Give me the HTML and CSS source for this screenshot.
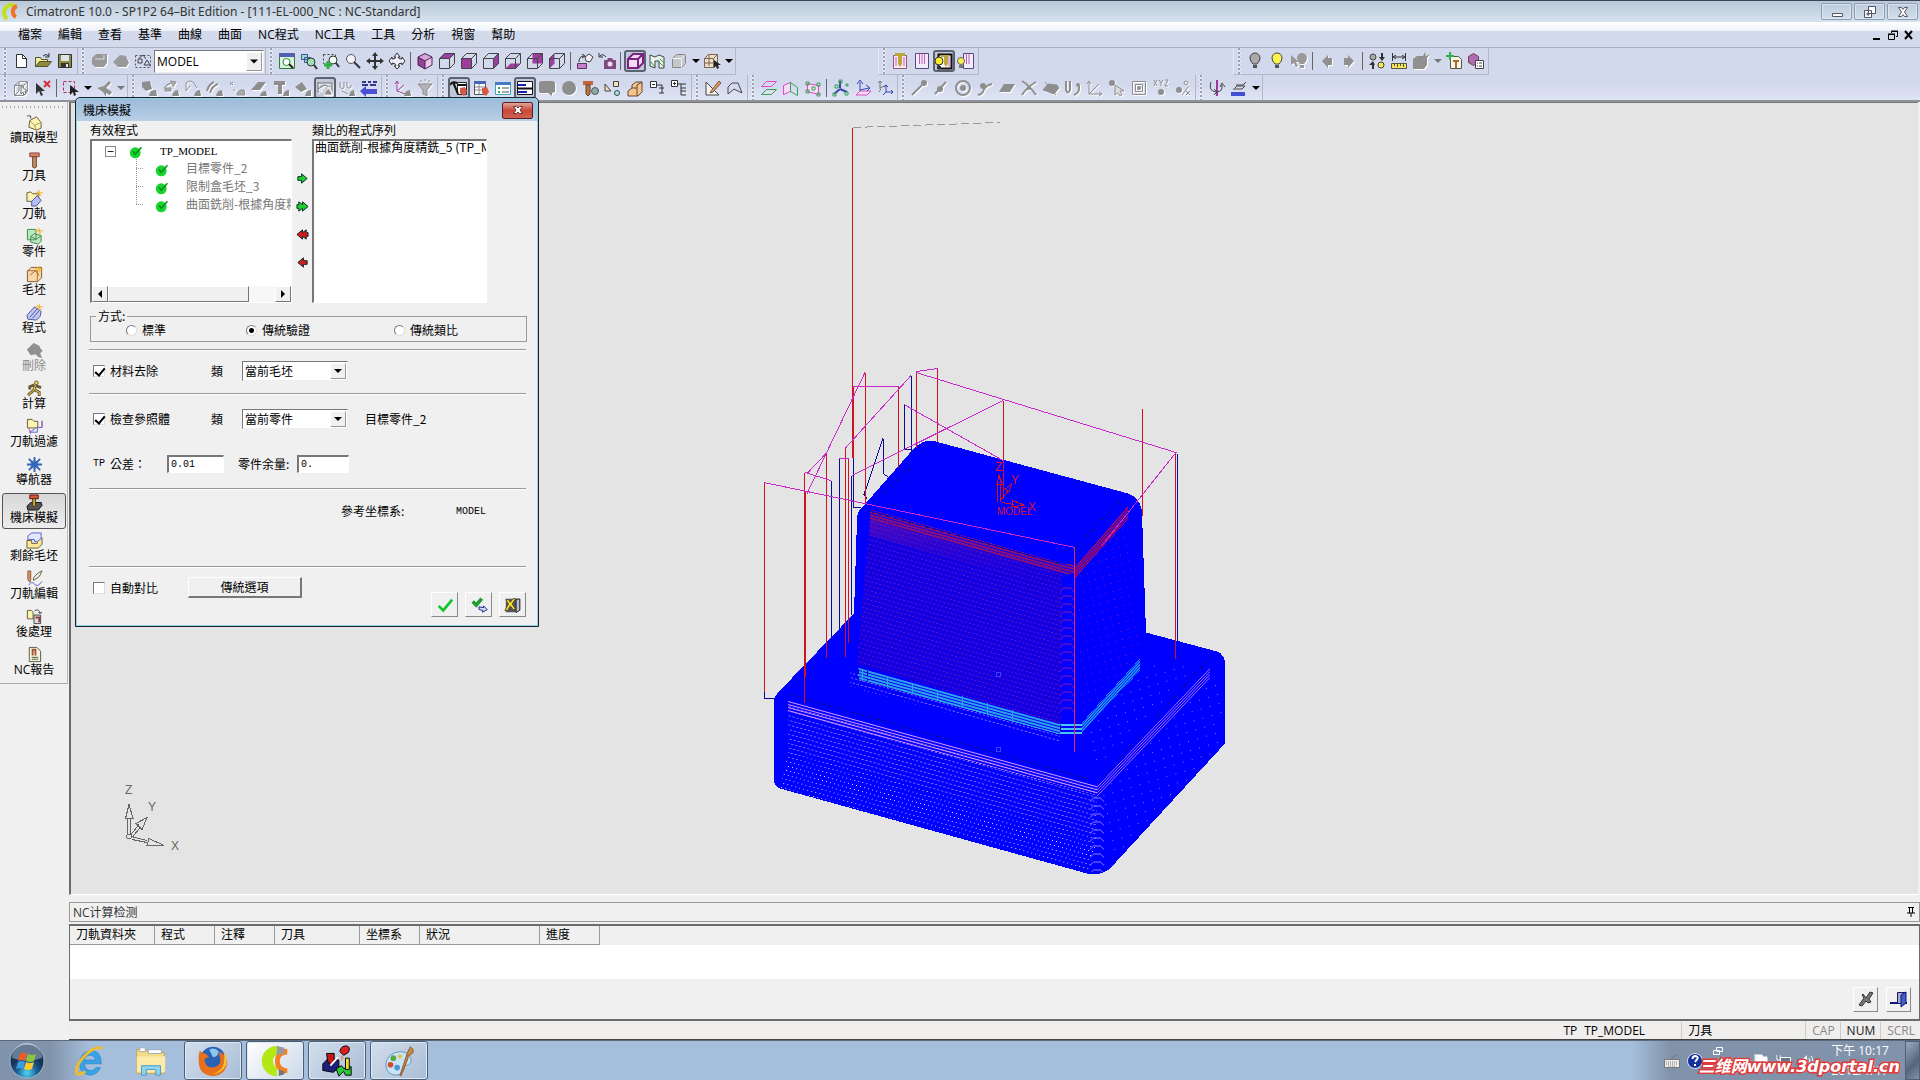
FILE: index.html
```
<!DOCTYPE html>
<html lang="zh-Hant">
<head>
    <meta charset="UTF-8">
    <title>CimatronE 10.0</title>
    <link rel="stylesheet" href="styles.css">
</head>
<body>
<!-- 圖示 -->
<svg class="defs">
    <symbol id="logo" viewBox="0 0 18 18"><path d="M13 2A8 8 0 0 0 6 16" fill="none" stroke="#c3e01c" stroke-width="4"/><path d="M16 3A6 6 0 0 0 15 14" fill="none" stroke="#f0742a" stroke-width="4"/></symbol>
    <symbol id="new" viewBox="0 0 18 18"><path d="M4.500 2.500h6l4 4v9h-10z" fill="#fff" stroke="#333"/><path d="M10.500 2.500v4h4" fill="none" stroke="#333"/></symbol>
    <symbol id="open" viewBox="0 0 18 18"><path d="M1.500 14.500v-9h5l1 2h6v2" fill="#f5ee9a" stroke="#55552a"/><path d="M1.500 14.500l4-5h12l-4 5z" fill="#8c8c3c" stroke="#55552a"/><path d="M9 4q3-3 6 0M15 1v4h-4" fill="none" stroke="#333"/></symbol>
    <symbol id="save" viewBox="0 0 18 18"><path d="M2.500 2.500h13v13h-13z" fill="#8c8c3c" stroke="#333"/><path d="M5 3h8v6H5z" fill="#dfe3ee"/><path d="M5 11h8v4H5z" fill="#333"/><path d="M10 12h2v3h-2z" fill="#eee"/></symbol>
    <symbol id="gstack" viewBox="0 0 18 18"><path d="M2 6l4-4h11v9l-3 4H5l-3-3z" fill="#999"/><path d="M5 7h9V3" fill="none" stroke="#ddd"/></symbol>
    <symbol id="gblob" viewBox="0 0 18 18"><path d="M1 10l7-7 6 1 3 7-3 4H6z" fill="#999"/></symbol>
    <symbol id="ucs" viewBox="0 0 18 18"><path d="M1.500 3.500h15v12h-15z" fill="none" stroke="#556" stroke-dasharray="2 2"/><path d="M4 7h4v4H4zM5 6l4-3 3 4M10 13l3-5 3 5z" fill="none" stroke="#444"/></symbol>
    <symbol id="zoomall" viewBox="0 0 18 18"><path d="M1.500 1.500h15v15h-15z" fill="#d8f4d8" stroke="#357a45"/><path d="M1 1h16v4H1z" fill="#5560b0"/><circle cx="8.500" cy="10" r="3.500" fill="#fff" stroke="#284"/><path d="M11 12l4 4" stroke="#222" stroke-width="2"/></symbol>
    <symbol id="zoomprev" viewBox="0 0 18 18"><path d="M1.500 2.500h6v5h-6zM4.500 5.500h6v5h-6z" fill="#9fe0c0" stroke="#3b52a0"/><circle cx="11" cy="10" r="4" fill="#9fe0b0" stroke="#333"/><path d="M14 13l3 4" stroke="#333" stroke-width="2"/></symbol>
    <symbol id="zoomwin" viewBox="0 0 18 18"><path d="M1.500 2.500h12v9h-12z" fill="none" stroke="#444" stroke-dasharray="2 2"/><circle cx="11" cy="8" r="4" fill="#f4fff4" stroke="#333"/><path d="M14 11l3 4" stroke="#333" stroke-width="2"/><path d="M2 13h8M6 9v8" stroke="#2fae4a" stroke-width="3"/></symbol>
    <symbol id="zoom" viewBox="0 0 18 18"><circle cx="7" cy="7" r="4.500" fill="#f2f2f6" stroke="#555"/><path d="M10 10l6 6" stroke="#333" stroke-width="2"/></symbol>
    <symbol id="pan" viewBox="0 0 18 18"><path d="M9 3v12M3 9h12" stroke="#333" stroke-width="2"/><path d="M9 0l3 4H6zM9 18l3-4H6zM0 9l4-3v6zM18 9l-4-3v6z" fill="#333"/></symbol>
    <symbol id="rotate" viewBox="0 0 18 18"><path d="M9 1l3 4h-2q0 2 4 2V5l3 4-3 4v-2q-4 0-4 3h2l-3 3-3-3h2q0-3-4-3v2L1 9l3-4v2q4 0 4-2H6z" fill="#eef" stroke="#333"/></symbol>
    <symbol id="cubeiso" viewBox="0 0 18 18"><path d="M2 5l7-3.500 7 3.500-7 4z" fill="#d9a3dc"/><path d="M2 5l7 4v8l-7-4z" fill="#98419b"/><path d="M9 9l7-4v8l-7 4z" fill="#e7c7ea"/><path d="M2 5l7-3.500 7 3.500v8l-7 4-7-4zM2 5l7 4 7-4M9 9v8" fill="none" stroke="#4a2450"/></symbol>
    <symbol id="cubewire" viewBox="0 0 18 18"><path d="M1.500 6.500h10v10h-10zM1.500 6.500l5-5h10v10l-5 5M11.500 6.500l5-5" fill="none" stroke="#444"/></symbol>
    <symbol id="cubetop" viewBox="0 0 18 18"><path d="M1.500 6.500l5-5h10l-5 5z" fill="#9c3d9f"/><use href="#cubewire"/></symbol>
    <symbol id="cubefront" viewBox="0 0 18 18"><path d="M1.500 6.500h10v10h-10z" fill="#9c3d9f"/><use href="#cubewire"/></symbol>
    <symbol id="cuberight" viewBox="0 0 18 18"><path d="M11.500 6.500l5-5v10l-5 5z" fill="#9c3d9f"/><use href="#cubewire"/></symbol>
    <symbol id="cubebottom" viewBox="0 0 18 18"><path d="M1.500 16.500l5-5h10l-5 5z" fill="#9c3d9f"/><use href="#cubewire"/></symbol>
    <symbol id="cubeback" viewBox="0 0 18 18"><path d="M6.500 1.500h10v10h-10z" fill="#9c3d9f"/><use href="#cubewire"/></symbol>
    <symbol id="cubeleft" viewBox="0 0 18 18"><path d="M1.500 6.500l5-5v10l-5 5z" fill="#9c3d9f"/><use href="#cubewire"/></symbol>
    <symbol id="setview" viewBox="0 0 18 18"><path d="M1.500 11.500h9v5h-9z" fill="#c77fc9" stroke="#5a3560"/><path d="M9 5l4-3 4 3-3 5-4-1z" fill="#f4eef4" stroke="#444"/><path d="M3 10q0-6 5-6M6 2l3 2-3 2" fill="none" stroke="#333"/></symbol>
    <symbol id="camera" viewBox="0 0 18 18"><path d="M6 8h3l1-2h4l1 2h3v9H6z" fill="#7d4a82"/><circle cx="12" cy="12" r="2.500" fill="#f3d7f4"/><path d="M8 5Q5 1 2 4M1 1v4h4" fill="none" stroke="#333"/></symbol>
    <symbol id="shade" viewBox="0 0 18 18"><path d="M2 7l5-5h10v9l-5 5H2z" fill="#f4d8f4"/><path d="M2 7l5-5h10v9l-5 5H2zM2 7h10v9M12 7l5-5" fill="none" stroke="#7a2382" stroke-width="2"/></symbol>
    <symbol id="section" viewBox="0 0 18 18"><path d="M2 3l5 2 4-2 5 2v11h-5v-7H7v7l-5-2z" fill="#e6f3e8" stroke="#444"/><path d="M3 10l4 5M11 10l5 5M12 7l4 4" stroke="#3a9a4a"/></symbol>
    <symbol id="cubegray" viewBox="0 0 18 18"><path d="M2.500 6.500l4-4h9v9l-4 4h-9z" fill="#c6c7cd" stroke="#888"/><path d="M2.500 6.500h9v9M11.500 6.500l4-4" fill="none" stroke="#f4f4f4"/></symbol>
    <symbol id="cubepick" viewBox="0 0 18 18"><path d="M1.500 6.500l4-4h9v9l-4 4h-9z" fill="#f1dcc6" stroke="#765"/><path d="M1.500 6.500h9v9M10.500 6.500l4-4M6 3v11M2 11h9" fill="none" stroke="#765"/><path d="M11 8v8l2-2 1 3 2-1-1-3h3z" fill="#222"/></symbol>
    <symbol id="tool1" viewBox="0 0 18 18"><path d="M2.500 3.500h13v13h-13z" fill="#fbe9f4" stroke="#8a5a78"/><path d="M4 1h10v3H4zM7 4h4v8l-2 3-2-3z" fill="#b9a83c"/><path d="M5 5v9M13 5v9" stroke="#e04cc0"/></symbol>
    <symbol id="tool2" viewBox="0 0 18 18"><path d="M2.500 1.500h13v15h-13z" fill="#f2ecfa" stroke="#5b4a80"/><path d="M6.500 2v10M9 2v10M11.500 2v10" stroke="#c65ac0"/></symbol>
    <symbol id="tool3" viewBox="0 0 18 18"><path d="M3.500 2.500h13v14h-13z" fill="#fff" stroke="#111" stroke-width="2"/><path d="M6 3h8v2H6zM9 5h4v7l-2 3-2-3z" fill="#b9a83c"/><path d="M14 5v10" stroke="#e04cc0"/><circle cx="4" cy="9" r="4" fill="#ffee2a" stroke="#333"/><path d="M2 14h4v3H2z" fill="#333"/></symbol>
    <symbol id="tool4" viewBox="0 0 18 18"><path d="M6.500 1.500h10v15h-10z" fill="#f2ecfa" stroke="#5b4a80"/><path d="M9.500 2v10M12 2v10" stroke="#c65ac0"/><circle cx="4" cy="9" r="3.500" fill="#f6ee50" stroke="#666"/><path d="M2 13h4v3H2z" fill="#777"/></symbol>
    <symbol id="bulb" viewBox="0 0 18 18"><path d="M9 1a5 5 0 0 0-5 5q0 3 3 6h4q3-3 3-6a5 5 0 0 0-5-5z" fill="currentColor" stroke="#444"/><path d="M7 13h4v3H7z" fill="#555"/></symbol>
    <symbol id="bulbpick" viewBox="0 0 18 18"><path d="M12 1a5 5 0 0 0-5 5q0 3 3 6h4q3-3 3-6a5 5 0 0 0-5-5zM10 13h4v3h-4zM1 3v10l3-2 2 4 2-1-2-4h3z" fill="#999"/></symbol>
    <symbol id="gleft" viewBox="0 0 18 18"><path d="M4 9l6-6v3h4v7h-4v3z" fill="#909090"/></symbol>
    <symbol id="gright" viewBox="0 0 18 18"><path d="M14 9L8 3v3H4v7h4v3z" fill="#909090"/></symbol>
    <symbol id="swap" viewBox="0 0 18 18"><circle cx="5" cy="5" r="3" fill="#aaa" stroke="#444"/><circle cx="13" cy="13" r="3" fill="#f6ee50" stroke="#444"/><path d="M11 5h2V1h2v4h2l-3 4zM7 13H6v4H4v-4H1l4-4z" fill="#333"/></symbol>
    <symbol id="measure" viewBox="0 0 18 18"><path d="M2.500 1v8M15.500 1v8M4 5h10M6 3L3 5l3 2M12 3l3 2-3 2" fill="none" stroke="#333"/><path d="M1.500 11.500h15v5h-15z" fill="#f4e65c" stroke="#554"/><path d="M4.500 12v2M7.500 12v3M10.500 12v2M13.500 12v3" stroke="#554"/></symbol>
    <symbol id="gbox" viewBox="0 0 18 18"><path d="M1 7l4-3h6l2-4 1 4 4-2-3 4v7l-3 4H1z" fill="#909090"/></symbol>
    <symbol id="addtool" viewBox="0 0 18 18"><path d="M5.500 4.500h8l3 3v9h-11z" fill="#f4f6ea" stroke="#554"/><path d="M8 8h6v2H8zM10 10h2v6h-2z" fill="#b06a30"/><path d="M1 4h8M5 0v8" stroke="#2fae4a" stroke-width="2"/></symbol>
    <symbol id="cubeprop" viewBox="0 0 18 18"><path d="M1.500 4.500l5-3 5 3v6l-5 3-5-3z" fill="#b06ab4" stroke="#644"/><path d="M8.500 8.500h8v8h-8z" fill="#fff" stroke="#444"/><path d="M10 11h1M12 11h3M10 14h1M12 14h3" stroke="#444"/></symbol>
    <symbol id="wirepick" viewBox="0 0 18 18"><path d="M2.500 6.500l5-4h8v10l-4 4h-9zM2.500 6.500h9v10M11.500 6.500l4-4M7 3v9l-4 4" fill="none" stroke="#8a8a8a"/><path d="M9 7v8l2-2 1 3 2-1-1-3h2z" fill="#eee" stroke="#777"/></symbol>
    <symbol id="unpick" viewBox="0 0 18 18"><path d="M2 4v11l3-3 2 5 2-1-2-4h4z" fill="#333"/><path d="M10 2l6 6M16 2l-6 6" stroke="#d3303c" stroke-width="2"/></symbol>
    <symbol id="boxpick" viewBox="0 0 18 18"><path d="M1.500 2.500h11v11h-11z" fill="none" stroke="#b03048" stroke-width="1" stroke-dasharray="3 2"/><path d="M8 6v10l3-3 1 4 2-1-1-3h4z" fill="#222"/></symbol>
    <symbol id="gwand" viewBox="0 0 18 18"><path d="M2 9l7-2 5-5 2 2-5 5 6 4-2 3-4-2v4l-3-5z" fill="#909090"/></symbol>
    <symbol id="g1" viewBox="0 0 18 18"><path d="M2 3l8-1 2 8-6 2-4-4zM9 17q1-7 7-6l1 6z" fill="#8e8e8e"/></symbol>
    <symbol id="g2" viewBox="0 0 18 18"><path d="M2 9q3-5 8-5M8 2l6 1-3 5M3 9h6v3H3z" fill="#aaa" stroke="#8e8e8e"/><path d="M10 17q1-6 6-6l1 6z" fill="#8e8e8e"/></symbol>
    <symbol id="g3" viewBox="0 0 18 18"><path d="M2 12V4q4-4 8 0l3 5M2 12l4-5" fill="none" stroke="#8e8e8e"/><path d="M10 17q1-6 6-6l1 6z" fill="#8e8e8e"/></symbol>
    <symbol id="g4" viewBox="0 0 18 18"><path d="M1 12q2-7 7-9M4 14q2-7 8-9" fill="none" stroke="#8e8e8e" stroke-width="2"/><path d="M10 17q1-6 6-6l1 6z" fill="#8e8e8e"/></symbol>
    <symbol id="g5" viewBox="0 0 18 18"><path d="M2 3l3 3M5 3L2 6M5 11h2" stroke="#8e8e8e"/><path d="M9 16q1-6 7-5l1 5z" fill="#aaa" stroke="#8e8e8e"/></symbol>
    <symbol id="g6" viewBox="0 0 18 18"><path d="M1 11L8 3h8l-6 8zM10 17q1-5 6-5l1 5z" fill="#8e8e8e"/></symbol>
    <symbol id="g7" viewBox="0 0 18 18"><path d="M2 2h11v4h-3v9H6V6H2zM11 17q1-6 6-6v6z" fill="#8e8e8e"/></symbol>
    <symbol id="g8" viewBox="0 0 18 18"><path d="M1 8l7-5 5 7-6 3zM11 17q1-6 6-6v6z" fill="#8e8e8e"/></symbol>
    <symbol id="g9" viewBox="0 0 18 18"><path d="M2 3v11M2 4h14v10M2 10l6-4 6 2" fill="none" stroke="#777"/><path d="M4 13l4-6M12 7l3 6M8 16q3-9 7-5l1 5z" fill="#8e8e8e" stroke="#eee"/></symbol>
    <symbol id="g10" viewBox="0 0 18 18"><path d="M2 3v5q4 4 4-1V3M9 3v5q4 3 4-2M4 12l6 3" fill="none" stroke="#8e8e8e"/><path d="M11 17q1-6 5-6l1 6z" fill="#8e8e8e"/></symbol>
    <symbol id="bluearrow" viewBox="0 0 18 18"><path d="M2 3h4M8 3h3M13 3h4M2 6h6M10 6h6" stroke="#33398a" stroke-width="2"/><path d="M0 12l6-5v3h11v5H6v3z" fill="#4a50d4"/></symbol>
    <symbol id="axpick" viewBox="0 0 18 18"><path d="M3 3v9l8 3M3 12l7-6M1 5l2-3 2 3" fill="none" stroke="#9a3f9c"/><path d="M10 17q1-6 6-6l1 6z" fill="#8e8e8e"/></symbol>
    <symbol id="funnel" viewBox="0 0 18 18"><path d="M2 5h14l-5 6v6l-4-2v-4z" fill="#b4b4b8" stroke="#8e8e8e"/><path d="M4 2h2M8 1h2M12 2h2" stroke="#8e8e8e"/></symbol>
    <symbol id="nc1" viewBox="0 0 18 18"><path d="M7.500 3.500h9v12h-9z" fill="#fff" stroke="#222"/><path d="M0 6q2-4 7-2M3 3l5 12M8 6h8" fill="none" stroke="#111" stroke-width="2"/><path d="M10 9l5-1 2 4-3 5-4-3z" fill="#d95745"/></symbol>
    <symbol id="nc2" viewBox="0 0 18 18"><path d="M2.500 2.500h11v13h-11z" fill="#fff" stroke="#555"/><path d="M2 2h12v3H2z" fill="#4b64b8"/><path d="M3 8h10M3 11h10M7 5v10" stroke="#888"/><path d="M10 9l5-1 2 5-3 4-4-3z" fill="#d95745"/></symbol>
    <symbol id="nc3" viewBox="0 0 18 18"><path d="M1.500 3.500h15v12h-15z" fill="#fff" stroke="#3fa0c0"/><path d="M1 3h16v3H1z" fill="#3f7fc0"/><path d="M4 9h2M4 13h2" stroke="#2fae4a" stroke-width="2"/><path d="M8 9h7M8 13h7" stroke="#555"/></symbol>
    <symbol id="nc4" viewBox="0 0 18 18"><path d="M1.500 2.500h15v13h-15z" fill="#fff" stroke="#111"/><path d="M2 6h8M2 13h9" stroke="#1b20b4" stroke-width="2"/><path d="M2 9.500h14" stroke="#111" stroke-width="2"/></symbol>
    <symbol id="gtalk" viewBox="0 0 18 18"><path d="M1 4q0-2 3-2h10q3 0 3 2v9l-3 1v3l-4-3H4q-3 0-3-2z" fill="#8e8e8e"/></symbol>
    <symbol id="gdot" viewBox="0 0 18 18"><circle cx="9" cy="9" r="7" fill="#8e8e8e"/></symbol>
    <symbol id="drill" viewBox="0 0 18 18"><path d="M1 2h10v4H1z" fill="#c4633c"/><path d="M4 6h4v9l-2 2-2-2z" fill="#b4763c" stroke="#643"/><circle cx="13" cy="12" r="3.500" fill="#8aa" stroke="#555"/></symbol>
    <symbol id="shapes" viewBox="0 0 18 18"><path d="M1 5v7h6zM9.500 2.500h5v5h-5z" fill="#f6e0c0" stroke="#444"/><circle cx="13" cy="14" r="2.500" fill="#9fe8f0" stroke="#444"/></symbol>
    <symbol id="stock" viewBox="0 0 18 18"><path d="M2 12l4-3V6l4-3h6v10l-4 4H2z" fill="#f3c48c" stroke="#643"/><path d="M6 9h5V6l5-3M11 9v8" fill="none" stroke="#643"/></symbol>
    <symbol id="tree1" viewBox="0 0 18 18"><path d="M2.500 2.500h6v6h-6z" fill="#fff" stroke="#333"/><path d="M4 5.500h3M9 6h5v8M11 9h5M11 14h5" fill="none" stroke="#333"/></symbol>
    <symbol id="tree2" viewBox="0 0 18 18"><path d="M1.500 1.500h6v6h-6z" fill="#fff" stroke="#333"/><path d="M3 4.500h3M4.500 3v3M8 5h3v11M11 9h5M11 12h5M11 16h5M11 5h5" fill="none" stroke="#333"/></symbol>
    <symbol id="sketch" viewBox="0 0 18 18"><path d="M2 3v13h13z" fill="#f4f4f4" stroke="#444"/><path d="M7 12l8-10 2 2-8 9-3 1z" fill="#d79c54" stroke="#854"/></symbol>
    <symbol id="curve" viewBox="0 0 18 18"><path d="M2 15V8l4-4h6l4 10M2 15l6-5 8 4" fill="none" stroke="#444"/></symbol>
    <symbol id="pl1" viewBox="0 0 18 18"><path d="M1.500 7.500l5-5h10l-5 5z" fill="none" stroke="#e04cc8"/><path d="M1.500 15.500l5-5h10l-5 5z" fill="none" stroke="#35a050"/></symbol>
    <symbol id="pl2" viewBox="0 0 18 18"><path d="M1.500 6.500l7-3v9l-7 3z" fill="#f8dcf4" stroke="#e04cc8"/><path d="M8.500 3.500l7 5v8l-7-4z" fill="none" stroke="#35a050"/></symbol>
    <symbol id="pl3" viewBox="0 0 18 18"><path d="M3.500 4.500l11 2v9l-11-3z" fill="#f8dcf4" stroke="#e04cc8"/><path d="M2 3h3v3H2zM13 4h3v3h-3zM2 11h3v3H2zM13 14h3v3h-3zM8 8h3v3H8z" fill="none" stroke="#35a050"/></symbol>
    <symbol id="ax1" viewBox="0 0 18 18"><path d="M8 9V2M8 10l7 3M8 10l-6 5" stroke="#3548b0" stroke-width="2"/><path d="M3 6h3v3H3zM7 1h3v3H7zM14 5h2v2h-2zM13 13h3v3h-3zM1 14h3v3H1z" fill="none" stroke="#35a050"/></symbol>
    <symbol id="ax2" viewBox="0 0 18 18"><path d="M2 16l4-4h11l-4 4z" fill="#f8dcf4" stroke="#e04cc8"/><path d="M6 12V3M6 11l9-2M3 5l3-4 3 4M12 6l4 3-3 3" fill="none" stroke="#3548b0" stroke-width="1"/></symbol>
    <symbol id="ax3" viewBox="0 0 18 18"><path d="M4 10V2M2 4l2-2 2 2M4 9l7-3M3 13l2-3" fill="none" stroke="#777"/><path d="M10 13V7M8 8l2-2 2 2M10 13h7M15 11l2 2-2 2M7 16l3-3" fill="none" stroke="#3548b0"/></symbol>
    <symbol id="p1" viewBox="0 0 18 18"><path d="M2 16L12 6" stroke="#8e8e8e" stroke-width="2"/><circle cx="14" cy="4" r="3" fill="#8e8e8e"/></symbol>
    <symbol id="p2" viewBox="0 0 18 18"><path d="M3 15L14 3" stroke="#8e8e8e" stroke-width="2"/><circle cx="8" cy="10" r="3" fill="#8e8e8e"/></symbol>
    <symbol id="p3" viewBox="0 0 18 18"><circle cx="9" cy="9" r="7" fill="none" stroke="#8e8e8e" stroke-width="2"/><circle cx="9" cy="9" r="3" fill="#8e8e8e"/></symbol>
    <symbol id="p4" viewBox="0 0 18 18"><path d="M2 16q5-1 6-6 3-4 8-5" fill="none" stroke="#8e8e8e" stroke-width="2"/><circle cx="7" cy="7" r="3" fill="#8e8e8e"/></symbol>
    <symbol id="p5" viewBox="0 0 18 18"><path d="M1 13l5-8h11l-5 8z" fill="#8e8e8e"/></symbol>
    <symbol id="p6" viewBox="0 0 18 18"><path d="M2 2q7 4 14 14M16 3Q7 8 2 16" fill="none" stroke="#8e8e8e" stroke-width="2"/><circle cx="9" cy="9" r="2" fill="#8e8e8e"/></symbol>
    <symbol id="p7" viewBox="0 0 18 18"><path d="M1 11l5-6 9 1 2 3-5 6zM3 3l11 13" fill="#8e8e8e" stroke="#8e8e8e"/></symbol>
    <symbol id="p8" viewBox="0 0 18 18"><path d="M2 2v9q2 5 4 0V2M10 16q6-2 5-9" fill="none" stroke="#8e8e8e" stroke-width="2"/><circle cx="14" cy="6" r="2" fill="#8e8e8e"/></symbol>
    <symbol id="p9" viewBox="0 0 18 18"><path d="M3 2v13h13M3 15L13 5M1 5l2-3 2 3M13 13l3 2-3 2" fill="none" stroke="#8e8e8e"/></symbol>
    <symbol id="p10" viewBox="0 0 18 18"><circle cx="4" cy="4" r="3" fill="#8e8e8e"/><path d="M7 6v10l3-2 2 3 2-1-2-4h4z" fill="#ddd" stroke="#8e8e8e"/></symbol>
    <symbol id="p11" viewBox="0 0 18 18"><path d="M2.500 2.500h13v13h-13zM5.500 5.500h7v7h-7z" fill="none" stroke="#8e8e8e"/><circle cx="9" cy="9" r="2" fill="#8e8e8e"/></symbol>
    <symbol id="p12" viewBox="0 0 18 18"><path d="M2 1l3 6M5 1L2 7M7 1l2 3 2-3M9 4v3M13 1h3l-3 6h3" fill="none" stroke="#8e8e8e"/><circle cx="9" cy="13" r="3" fill="#8e8e8e"/></symbol>
    <symbol id="p13" viewBox="0 0 18 18"><circle cx="5" cy="11" r="3" fill="#8e8e8e"/><circle cx="12" cy="4" r="2" fill="none" stroke="#8e8e8e"/><path d="M8 16l7-9M12 12l4 4M16 12l-4 4" stroke="#8e8e8e"/></symbol>
    <symbol id="spin" viewBox="0 0 18 18"><path d="M9 1v16" stroke="#a0379f" stroke-width="2"/><path d="M3 3q-3 9 5 10 7 0 6-7M12 8l2-4 3 4M6 10l3 3-3 3" fill="none" stroke="#444"/></symbol>
    <symbol id="levels" viewBox="0 0 18 18"><path d="M3 10h9l3-3H7l-2 2M6 6h7l3-3" fill="none" stroke="#444" stroke-width="1"/><path d="M1 13h14v4H1z" fill="#4050d0"/></symbol>

    <symbol id="s-model" viewBox="0 0 18 18"><path d="M4 7l7-4 5 6v6l-5 2-8-3z" fill="#fbf3b4" stroke="#665a30"/><path d="M4 7l5 5 7-3M9 12l2 5" fill="none" stroke="#a5955a"/><path d="M1 2h4M5 2v3" stroke="#555"/></symbol>
    <symbol id="s-tool" viewBox="0 0 18 18"><path d="M4 1h10v4H4z" fill="#d98762" stroke="#844"/><path d="M7 5h4v11l-2 1-2-1z" fill="#c58b58" stroke="#643"/></symbol>
    <symbol id="s-tp" viewBox="0 0 18 18"><path d="M1 3l4-1 2 2h6v8H1z" fill="#fbf3b4" stroke="#665a30"/><path d="M6 12l6-6 4 5-5 6H6z" fill="#b5bdf4" stroke="#44509a"/><path d="M14 0v7M10 3h8M12 1l4 5" stroke="#efb422"/></symbol>
    <symbol id="s-part" viewBox="0 0 18 18"><path d="M1.500 1.500h9v11h-9zM5 9l4-3 7 2v6l-3 3-8-2z" fill="#bce8c0" stroke="#3f8a4a"/><path d="M5 9l6 3 5-4" fill="none" stroke="#3f8a4a"/><path d="M14 0v7M10 3h8M12 1l4 5" stroke="#efb422"/></symbol>
    <symbol id="s-stock" viewBox="0 0 18 18"><path d="M1.500 5.500l4-4h11v11l-4 4h-11z" fill="#fbd8a8" stroke="#7a5a30"/><path d="M1 5h11v11M4 10l6-5 4 5" fill="none" stroke="#a56a30"/><path d="M14 0v7M10 3h8M12 1l4 5" stroke="#efb422"/></symbol>
    <symbol id="s-proc" viewBox="0 0 18 18"><path d="M1 12l8-9 7 5-1 5-4 4-9-1z" fill="#c3c9f6" stroke="#44509a"/><path d="M4 14l8-9M7 15l8-9" stroke="#44509a"/><path d="M14 0v7M10 3h8M12 1l4 5" stroke="#efb422"/></symbol>
    <symbol id="s-del" viewBox="0 0 18 18"><path d="M1 8l7-7 6 3 2 4 2 1-3 3 2 5-4-1-3-3-5 1z" fill="#909090"/></symbol>
    <symbol id="s-calc" viewBox="0 0 18 18"><circle cx="11" cy="3" r="2" fill="#f4d750" stroke="#665a30"/><path d="M9 5L4 7v3M10 6l-2 5-6 5M9 10l5 3v4M10 6l6 2" fill="none" stroke="#665a30" stroke-width="3"/><path d="M10 6l-2 5-6 5M9 10l5 3v3" fill="none" stroke="#f4d750"/></symbol>
    <symbol id="s-filter" viewBox="0 0 18 18"><path d="M1.500 1.500h5l2 2h4v7h-11z" fill="#fbf3b4" stroke="#665a30"/><path d="M17 3v7h-5v5H4l6-4" fill="none" stroke="#5560d0"/><path d="M3 11l2 6M17 3v7" stroke="#c050b0"/></symbol>
    <symbol id="s-nav" viewBox="0 0 18 18"><path d="M9 1v16M1 9h16M3 3l12 12M15 3L3 15" stroke="#3264b8" stroke-width="2"/><circle cx="9" cy="9" r="4" fill="none" stroke="#3264b8"/></symbol>
    <symbol id="s-sim" viewBox="0 0 18 18"><path d="M1 13l4-4h11l1 3-4 5H2z" fill="#555" stroke="#111"/><path d="M4 1h9v4H4z" fill="#d45a34" stroke="#611"/><path d="M7 5h3v8H7z" fill="#d8b23a" stroke="#432"/></symbol>
    <symbol id="s-rest" viewBox="0 0 18 18"><path d="M1 9h5v3h6V8l5-2v7l-4 4H1z" fill="#fbe898" stroke="#665a30"/><path d="M2 4l4-3h10v6l-4 3H9V8H2z" fill="#e3e6ff" stroke="#5560d0"/></symbol>
    <symbol id="s-edit" viewBox="0 0 18 18"><path d="M2 1h3v9l-1 3-2-3z" fill="#d79c54" stroke="#854"/><path d="M8 8l5-5 4-2-3 6-6 4z" fill="#eee" stroke="#665a30"/><path d="M3 16q3-5 6-1t8-3" fill="none" stroke="#5560d0"/></symbol>
    <symbol id="s-post" viewBox="0 0 18 18"><path d="M1.500 2.500h4l2 2v7h-6z" fill="#fbf3b4" stroke="#665a30"/><path d="M9 3q5-3 6 3M13 5h4" fill="none" stroke="#444"/><path d="M8.500 7.500h7v9h-7z" fill="#ddd" stroke="#444"/><path d="M10 10h4v5" fill="none" stroke="#844" stroke-width="2"/></symbol>
    <symbol id="s-rep" viewBox="0 0 18 18"><path d="M3.500 1.500h8l4 4v11h-12z" fill="#f4f6da" stroke="#554"/><path d="M6 4h5M7 4v6M10 4v6" stroke="#a4553a" stroke-width="2"/><path d="M6 12h7M6 14h7" stroke="#554"/></symbol>

    <symbol id="ok" viewBox="0 0 18 18"><circle cx="8" cy="10" r="7" fill="#18d42c"/><path d="M5 8l3 4 8-9" fill="none" stroke="#0a8c1e" stroke-width="2"/></symbol>
    <symbol id="arr" viewBox="0 0 14 14"><path d="M2 5h4V2l6 5-6 5V9H2z" fill="currentColor" stroke="#022"/></symbol>
    <symbol id="arr2" viewBox="0 0 14 14"><path d="M1 5h2V2l4 3V2l6 5-6 5V9l-4 3V9H1z" fill="currentColor" stroke="#022"/></symbol>
    <symbol id="down" viewBox="0 0 8 8"><path d="M0 2h8L4 6z" fill="currentColor"/></symbol>
</svg>

<header class="titlebar">
    <svg class="i16"><use href="#logo"/></svg>
    <h1>CimatronE 10.0 - SP1P2 64–Bit Edition - [111-EL-000_NC : NC-Standard]</h1>
    <div class="winbtns">
        <button aria-label="最小化"><svg viewBox="0 0 20 14"><path d="M5.500 8.500h10v3h-10z" fill="#fff" stroke="#556"/></svg></button>
        <button aria-label="還原"><svg viewBox="0 0 20 14"><path d="M8.500 1.500h7v7h-7zM4.500 5.500h7v7h-7zM7 8h2v2H7z" fill="#fff" stroke="#556"/></svg></button>
        <button aria-label="關閉"><svg viewBox="0 0 20 14"><path d="M5.500 2.500h3l1.500 2 1.500-2h3l-3 4.500 3 4.500h-3l-1.500-2-1.500 2h-3l3-4.500z" fill="#fff" stroke="#556"/></svg></button>
    </div>
</header>

<nav class="menubar">
    <a href="#">檔案</a><a href="#">編輯</a><a href="#">查看</a><a href="#">基準</a><a href="#">曲線</a><a href="#">曲面</a><a href="#">NC程式</a><a href="#">NC工具</a><a href="#">工具</a><a href="#">分析</a><a href="#">視窗</a><a href="#">幫助</a>
    <div class="mdi">
        <button aria-label="最小化"><svg viewBox="0 0 12 12"><path d="M2 10h7" stroke="#000" stroke-width="2"/></svg></button>
        <button aria-label="還原"><svg viewBox="0 0 12 12"><path d="M4.500 4V2.500h6v5H9M4 2h7" fill="none" stroke="#000"/><path d="M1.500 5.500h6v5h-6zM1 5h7" fill="none" stroke="#000"/></svg></button>
        <button aria-label="關閉"><svg viewBox="0 0 12 12"><path d="M2 2l7 8M9 2l-7 8" stroke="#000" stroke-width="2"/></svg></button>
    </div>
</nav>

<div class="toolbars">
<div class="row">
    <div class="group">
        <button><svg><use href="#new"/></svg></button><button><svg><use href="#open"/></svg></button><button><svg><use href="#save"/></svg></button>
    </div>
    <div class="group">
        <button class="off"><svg><use href="#gstack"/></svg></button><button class="off"><svg><use href="#gblob"/></svg></button><button><svg><use href="#ucs"/></svg></button>
        <div class="combo big">
            <select aria-label="UCS"><option>MODEL</option></select>
            <svg><use href="#down"/></svg>
        </div>
    </div>
    <div class="group">
        <button><svg><use href="#zoomall"/></svg></button><button><svg><use href="#zoomprev"/></svg></button><button><svg><use href="#zoomwin"/></svg></button><button><svg><use href="#zoom"/></svg></button><button><svg><use href="#pan"/></svg></button><button><svg><use href="#rotate"/></svg></button>
        <i class="sep"></i>
        <button><svg><use href="#cubeiso"/></svg></button><button><svg><use href="#cubetop"/></svg></button><button><svg><use href="#cubefront"/></svg></button><button><svg><use href="#cuberight"/></svg></button><button><svg><use href="#cubebottom"/></svg></button><button><svg><use href="#cubeback"/></svg></button><button><svg><use href="#cubeleft"/></svg></button>
        <i class="sep"></i>
        <button><svg><use href="#setview"/></svg></button><button><svg><use href="#camera"/></svg></button>
        <i class="sep"></i>
        <button class="on"><svg><use href="#shade"/></svg></button><button><svg><use href="#section"/></svg></button><button><svg><use href="#cubegray"/></svg></button><button class="arrow"><svg><use href="#down"/></svg></button><button><svg><use href="#cubepick"/></svg></button><button class="arrow"><svg><use href="#down"/></svg></button>
    </div>
    <div class="group nctools">
        <button><svg><use href="#tool1"/></svg></button><button><svg><use href="#tool2"/></svg></button><button class="on"><svg><use href="#tool3"/></svg></button><button><svg><use href="#tool4"/></svg></button>
    </div>
    <div class="group display">
        <button class="gray"><svg><use href="#bulb"/></svg></button><button class="yellow"><svg><use href="#bulb"/></svg></button><button class="off"><svg><use href="#bulbpick"/></svg></button>
        <i class="sep"></i>
        <button class="off"><svg><use href="#gleft"/></svg></button><button class="off"><svg><use href="#gright"/></svg></button>
        <i class="sep"></i>
        <button><svg><use href="#swap"/></svg></button><button><svg><use href="#measure"/></svg></button><button class="off"><svg><use href="#gbox"/></svg></button><button class="arrow dim"><svg><use href="#down"/></svg></button><button><svg><use href="#addtool"/></svg></button><button><svg><use href="#cubeprop"/></svg></button>
    </div>
</div>
<div class="row">
    <div class="group">
        <button class="off"><svg><use href="#wirepick"/></svg></button><button><svg><use href="#unpick"/></svg></button>
        <i class="sep"></i>
        <button><svg><use href="#boxpick"/></svg></button><button class="arrow"><svg><use href="#down"/></svg></button><button class="off"><svg><use href="#gwand"/></svg></button><button class="arrow dim"><svg><use href="#down"/></svg></button>
    </div>
    <div class="group">
        <button class="off"><svg><use href="#g1"/></svg></button><button class="off"><svg><use href="#g2"/></svg></button><button class="off"><svg><use href="#g3"/></svg></button><button class="off"><svg><use href="#g4"/></svg></button><button class="off"><svg><use href="#g5"/></svg></button><button class="off"><svg><use href="#g6"/></svg></button><button class="off"><svg><use href="#g7"/></svg></button><button class="off"><svg><use href="#g8"/></svg></button><button class="off on"><svg><use href="#g9"/></svg></button><button class="off"><svg><use href="#g10"/></svg></button><button><svg><use href="#bluearrow"/></svg></button>
    </div>
    <div class="group">
        <button class="off"><svg><use href="#axpick"/></svg></button><button class="off"><svg><use href="#funnel"/></svg></button>
    </div>
    <div class="group">
        <button class="on"><svg><use href="#nc1"/></svg></button><button><svg><use href="#nc2"/></svg></button><button><svg><use href="#nc3"/></svg></button><button class="on"><svg><use href="#nc4"/></svg></button><button class="off"><svg><use href="#gtalk"/></svg></button><button class="off"><svg><use href="#gdot"/></svg></button><button><svg><use href="#drill"/></svg></button><button><svg><use href="#shapes"/></svg></button><button><svg><use href="#stock"/></svg></button><button><svg><use href="#tree1"/></svg></button><button><svg><use href="#tree2"/></svg></button>
    </div>
    <div class="group">
        <button><svg><use href="#sketch"/></svg></button><button><svg><use href="#curve"/></svg></button>
    </div>
    <div class="group">
        <button><svg><use href="#pl1"/></svg></button><button><svg><use href="#pl2"/></svg></button><button><svg><use href="#pl3"/></svg></button>
        <i class="sep"></i>
        <button><svg><use href="#ax1"/></svg></button><button><svg><use href="#ax2"/></svg></button><button><svg><use href="#ax3"/></svg></button>
    </div>
    <div class="group">
        <button class="off"><svg><use href="#p1"/></svg></button><button class="off"><svg><use href="#p2"/></svg></button><button class="off"><svg><use href="#p3"/></svg></button><button class="off"><svg><use href="#p4"/></svg></button><button class="off"><svg><use href="#p5"/></svg></button><button class="off"><svg><use href="#p6"/></svg></button><button class="off"><svg><use href="#p7"/></svg></button><button class="off"><svg><use href="#p8"/></svg></button><button class="off"><svg><use href="#p9"/></svg></button><button class="off"><svg><use href="#p10"/></svg></button><button class="off"><svg><use href="#p11"/></svg></button><button class="off"><svg><use href="#p12"/></svg></button><button class="off"><svg><use href="#p13"/></svg></button>
    </div>
    <div class="group">
        <button><svg><use href="#spin"/></svg></button><button><svg><use href="#levels"/></svg></button><button class="arrow"><svg><use href="#down"/></svg></button>
    </div>
</div>
</div>

<main class="main">
    <aside class="side">
        <div class="guide">
            <button><svg><use href="#s-model"/></svg>讀取模型</button>
            <button><svg><use href="#s-tool"/></svg>刀具</button>
            <button><svg><use href="#s-tp"/></svg>刀軌</button>
            <button><svg><use href="#s-part"/></svg>零件</button>
            <button><svg><use href="#s-stock"/></svg>毛坯</button>
            <button><svg><use href="#s-proc"/></svg>程式</button>
            <button disabled><svg><use href="#s-del"/></svg>刪除</button>
            <button><svg><use href="#s-calc"/></svg>計算</button>
            <button><svg><use href="#s-filter"/></svg>刀軌過濾</button>
            <button><svg><use href="#s-nav"/></svg>導航器</button>
            <button class="cur"><svg><use href="#s-sim"/></svg>機床模擬</button>
            <button><svg><use href="#s-rest"/></svg>剩餘毛坯</button>
            <button><svg><use href="#s-edit"/></svg>刀軌編輯</button>
            <button><svg><use href="#s-post"/></svg>後處理</button>
            <button><svg><use href="#s-rep"/></svg>NC報告</button>
        </div>
    </aside>

    <div class="work">
        <div class="view">
            <svg viewBox="71 103 1847 790" shape-rendering="crispEdges">
                <defs>
                    <pattern id="dots" width="4" height="4" patternUnits="userSpaceOnUse" patternTransform="matrix(1 .28 -.55 1 0 0)"><rect width="2" height="1" fill="#8468f8"/></pattern>
                    <pattern id="dotsW" width="4" height="4" patternUnits="userSpaceOnUse" patternTransform="matrix(1 .28 -.55 1 0 0)"><rect width="1" height="1" fill="#fff"/></pattern>
                    <pattern id="dotsR" width="4" height="4" patternUnits="userSpaceOnUse" patternTransform="matrix(1 .28 -.55 1 0 0)"><rect width="2" height="1" fill="#5c14c4"/></pattern>
                    <pattern id="sparse" width="9" height="9" patternUnits="userSpaceOnUse" patternTransform="matrix(1 -.3 .2 1 0 0)"><rect width="1" height="1" fill="#8f86ff"/></pattern>
                    <pattern id="sparseR" width="7" height="8" patternUnits="userSpaceOnUse" patternTransform="matrix(1 -.3 .2 1 0 0)"><rect width="1" height="1" fill="#a01a9a"/></pattern>
                    <pattern id="redF" width="6" height="3" patternUnits="userSpaceOnUse" patternTransform="matrix(1 .28 0 1 0 0)"><rect width="6" height="2" fill="#8c1078"/></pattern>
                    <pattern id="redS" width="6" height="3" patternUnits="userSpaceOnUse" patternTransform="matrix(1 -1.15 0 1 0 0)"><rect width="6" height="2" fill="#a80c60"/></pattern>
                    <pattern id="cyF" width="6" height="3" patternUnits="userSpaceOnUse" patternTransform="matrix(1 .28 0 1 0 1)"><rect width="6" height="2" fill="#2ea4e8"/></pattern>
                    <pattern id="cyS" width="6" height="3" patternUnits="userSpaceOnUse" patternTransform="matrix(1 -1.1 0 1 0 0)"><rect width="6" height="2" fill="#1f9cf4"/></pattern>
                    <pattern id="pkF" width="6" height="3" patternUnits="userSpaceOnUse" patternTransform="matrix(1 .276 0 1 0 0)"><rect width="6" height="1" fill="#d898f8"/></pattern>
                    <pattern id="pkS" width="6" height="3" patternUnits="userSpaceOnUse" patternTransform="matrix(1 -1.05 0 1 0 0)"><rect width="6" height="1" fill="#a874f8"/></pattern>
                    <pattern id="arcR" x="1057" y="585" width="20" height="8" patternUnits="userSpaceOnUse"><path d="M3 6q3-4 7-4t7 4" fill="none" stroke="#9418a4"/></pattern>
                    <pattern id="arcW" x="1087" y="795" width="20" height="8" patternUnits="userSpaceOnUse"><path d="M3 6q3-4 7-4t7 4" fill="none" stroke="#8878ff"/></pattern>
                    <linearGradient id="fade" x2="0" y2="1"><stop offset="0" stop-color="#7a10a0" stop-opacity=".6"/><stop offset="1" stop-color="#1200e2" stop-opacity="0"/></linearGradient>
                </defs>
                <path d="M853 127L1000 122" stroke="#999" stroke-dasharray="8 4" fill="none"/>
                <!-- 零件 -->
                <path d="M932 440L1128 493Q1141 498 1142 512L1146 632 1217 651Q1225 654 1225 664V743L1110 868Q1100 876 1087 873L780 788Q774 786 774 780V700Q774 696 780 690L854 613 857 519Q857 511 862 507L913 449Q921 440 932 440z" fill="#00f"/>
                <path d="M870 513L1062 567 1061 724 857 664z" fill="#1200e2"/>
                <path d="M870 513L1062 567 1061 724 857 664z" fill="url(#dotsR)"/>
                <path d="M788 703L1097 788 1097 835 788 752z" fill="url(#dots)"/>
                <path d="M788 752L1097 835 1090 872 780 787z" fill="url(#dotsW)"/>
                <path d="M1078 572L1128 513 1140 650 1082 716z" fill="url(#sparseR)"/>
                <path d="M1103 790L1222 668V742L1110 862zM1090 725L1150 664 1200 664 1090 775z" fill="url(#sparse)"/>
                <path d="M850 670L1060 732 1060 744 850 686z" fill="url(#dots)"/>
                <path d="M870 509L1063 563h12v10h-13L870 519z" fill="url(#redF)"/>
                <path d="M870 519L1062 573v16L870 535z" fill="url(#fade)"/>
                <path d="M1075 566L1128 505v14L1075 578z" fill="url(#redS)"/>
                <path d="M858 667L1060 723v11L858 679z" fill="url(#cyF)"/>
                <path d="M1060 723h22v2h-22zM1060 727h22v2h-22zM1060 731h22v2h-22z" fill="#48c4f4"/>
                <path d="M1082 722L1140 658v12L1082 732z" fill="url(#cyS)"/>
                <path d="M788 700L1097 785v10L788 711z" fill="url(#pkF)"/>
                <path d="M1097 786L1210 667v12L1097 797z" fill="url(#pkS)"/>
                <path d="M1057 585h20v128h-20z" fill="url(#arcR)"/>
                <path d="M1087 795h20v76h-20z" fill="url(#arcW)"/>
                <path d="M870 511L1063 564M1074 549L1120 500M790 694L1090 779M1103 776L1212 655M883 493L910 468M858 668v10M867 670v10M1060 724v8" stroke="#0a0a96" stroke-dasharray="5 3" fill="none"/>
                <path d="M996 672h4v4h-4zM996 747h4v4h-4z" stroke="#3f3fff" fill="none"/>
                <!-- 刀軌 -->
                <g fill="none" stroke="#0c0c9c">
                    <path d="M911 375V452M904 404V449H911M851.500 475V614M853.500 456V507H861M883 438V473L889 477M883 438L864 494 867 498M1177.500 453V640M764.500 691V698H776M831 480V638M839 458V630"/>
                </g>
                <g fill="none" stroke="#d2141e">
                    <path d="M852.500 127V457M865.500 372V502M898.500 386V467M845.500 448V656M916.500 371V447M937.500 368V441M1003.500 400V498M1142.500 408V515M1175.500 452V658M764.500 482V691M804.500 472V702M826.500 452V657M848.500 458V642"/>
                    <path d="M853 385V457M805 490V676" stroke-width="2"/>
                    <path d="M1074.500 547V751" stroke="#e6285a"/>
                    <path d="M997.500 501V484h3v17M997 484l2-9 3 9zM1000 500l8-9M1005 489l7-6-3 8zM1002 502l12 2M1013 500l12 5-13 1z"/>
                </g>
                <g fill="none" stroke="#c828cc">
                    <path d="M865 372L807 493M853 385.500H899M911 375L845 448M916 371L938 368M916 372L1176 452L1102 545M904 404L1003 460M1003 400L852 475M764 482L1075 547M805 472L831 480M807 473L827 452M839 458H849"/>
                </g>
                <g class="axes red"><text x="995" y="470">Z</text><text x="1011" y="483">Y</text><text x="1028" y="510">X</text><text class="sm" x="997" y="514">MODEL</text></g>
                <!-- 座標軸 -->
                <g fill="none" stroke="#666">
                    <path d="M127.500 834V818M130.500 834V818M125.500 818l3.500-14 4 14zM131 834l8-10M133 836l7-9M136 823l11-6-5 12zM131 836l16 4M132 839l15 3M149 838l15 7h-17z"/>
                    <circle cx="129" cy="836" r="2.500"/>
                </g>
                <g class="axes"><text x="125" y="793">Z</text><text x="148" y="810">Y</text><text x="171" y="849">X</text></g>
            </svg>
        </div>

        <section class="check">
            <h2>NC计算检测<svg viewBox="0 0 10 10"><path d="M2 .5h6M3.500 1v5M6.500 1v5M1 6h8M5 6v4" stroke="#000" fill="none"/></svg></h2>
            <div class="grid">
                <table>
                    <tr><th class="w85">刀軌資料夾</th><th class="w60">程式</th><th class="w60">注釋</th><th class="w85">刀具</th><th class="w60">坐標系</th><th class="w120">狀況</th><th class="w60">進度</th><th></th></tr>
                </table>
                <div class="btns">
                    <button aria-label="停止"><svg viewBox="0 0 18 18"><path d="M6 4l3 4 4-6 3 1-4 6 2 3-3 1-2-2-4 5-3-1 5-7-2-3z" fill="#777" stroke="#333"/></svg></button>
                    <button aria-label="離開"><svg viewBox="0 0 18 18"><path d="M0 13h17" stroke="#14147a" stroke-width="2"/><path d="M7.500 2.500h8v11h-8z" fill="#aab" stroke="#14147a"/><path d="M11 5l5-3v11l-5 4z" fill="#4060c8" stroke="#14147a"/></svg></button>
                </div>
            </div>
        </section>

        <footer class="status">
            <span>TP</span><span class="tp">TP_MODEL</span><span class="tool">刀具</span><span class="key">CAP</span><span class="key lit">NUM</span><span class="key">SCRL</span>
        </footer>
    </div>
</main>

<!-- 機床模擬 -->
<form class="dialog">
    <div class="dtitle">機床模擬<button type="button" aria-label="關閉"><svg viewBox="0 0 12 10"><path d="M1.500 1.500h3L6 3l1.500-1.500h3L8 5l2.500 3.500h-3L6 7 4.500 8.500h-3L4 5z" fill="#fff" stroke="#633"/></svg></button></div>
    <div class="lists">
        <div class="left">
            <p>有效程式</p>
            <div class="box">
                <ul class="tree">
                    <li><span class="minus">−</span><svg><use href="#ok"/></svg><span class="root">TP_MODEL</span>
                        <ul>
                            <li><svg><use href="#ok"/></svg><span>目標零件_2</span></li>
                            <li><svg><use href="#ok"/></svg><span>限制盒毛坯_3</span></li>
                            <li><svg><use href="#ok"/></svg><span>曲面銑削-根據角度精銑_5</span></li>
                        </ul>
                    </li>
                </ul>
                <div class="scroll"><button type="button" class="sl"><svg><use href="#down"/></svg></button><i></i><button type="button" class="sr"><svg><use href="#down"/></svg></button></div>
            </div>
        </div>
        <div class="moves">
            <button type="button" class="green"><svg><use href="#arr"/></svg></button>
            <button type="button" class="green"><svg><use href="#arr2"/></svg></button>
            <button type="button" class="redb"><svg><use href="#arr2"/></svg></button>
            <button type="button" class="redb"><svg><use href="#arr"/></svg></button>
        </div>
        <div class="right">
            <p>類比的程式序列</p>
            <div class="box"><span>曲面銑削-根據角度精銑_5 (TP_MODEL)</span></div>
        </div>
    </div>
    <fieldset>
        <legend>方式:</legend>
        <label><input type="radio" name="mode">標準</label>
        <label><input type="radio" name="mode" checked>傳統驗證</label>
        <label><input type="radio" name="mode">傳統類比</label>
    </fieldset>
    <hr>
    <div class="line l1">
        <label><input type="checkbox" checked>材料去除</label>
        <label for="stk">類</label>
        <div class="combo"><select id="stk"><option>當前毛坯</option></select><svg><use href="#down"/></svg></div>
    </div>
    <hr>
    <div class="line l2">
        <label><input type="checkbox" checked>檢查參照體</label>
        <label for="prt">類</label>
        <div class="combo"><select id="prt"><option>當前零件</option></select><svg><use href="#down"/></svg></div>
        <span>目標零件_2</span>
    </div>
    <div class="line l3">
        <label for="tol"><tt>TP</tt> 公差：</label><input id="tol" type="text" value="0.01">
        <label for="ofs">零件余量:</label><input id="ofs" type="text" value="0.">
    </div>
    <hr>
    <div class="line l4"><span>參考坐標系:</span><tt>MODEL</tt></div>
    <hr>
    <div class="line l5">
        <label><input type="checkbox">自動對比</label>
        <button type="button" class="opt">傳統選項</button>
        <div class="acts">
            <button type="button" aria-label="確定"><svg viewBox="0 0 20 20"><path d="M3 11l5 5L18 4" fill="none" stroke="#12c82c" stroke-width="3"/></svg></button>
            <button type="button" aria-label="套用"><svg viewBox="0 0 20 20"><path d="M3 6l4 4 6-7" fill="none" stroke="#1f9c34" stroke-width="4"/><path d="M10 12l5 1v-2l4 4-5 3v-2l-4-1z" fill="#cdf" stroke="#14147a"/></svg></button>
            <button type="button" aria-label="離開"><svg viewBox="0 0 20 20"><path d="M2 3h16v13l-4 2H2z" fill="#555"/><path d="M13.500 3.500h4v12l-4 3z" fill="#bbd" stroke="#222"/><path d="M2 4h3l2 3 3-4h3L9 9l4 6h-3l-3-4-3 5H1l4-7z" fill="#f8e22c" stroke="#543"/></svg></button>
        </div>
    </div>
</form>

<div class="taskbar">
    <button class="start" aria-label="開始"><svg viewBox="0 0 36 36"><defs><radialGradient id="orb" cy=".85"><stop offset="0" stop-color="#4fd8f4"/><stop offset=".6" stop-color="#1c5c94"/><stop offset="1" stop-color="#153458"/></radialGradient></defs><circle cx="18" cy="18" r="17" fill="url(#orb)" stroke="#9db8cc"/><path d="M3 15a15 15 0 0 1 30 0q-15 5-30 0z" fill="#fff" opacity=".35"/><path d="M11 11q4-3 7 0l-2 7q-3-2-7 0z" fill="#ef5a28"/><path d="M19 11q4 2 8 0l-2 7q-4 2-8 0z" fill="#8cc63c"/><path d="M9 19q3-2 7 0l-2 7q-3-2-7 0z" fill="#3c9ce0"/><path d="M17 19q4 2 8 0l-2 7q-4 2-8 0z" fill="#fcc82c"/></svg></button>
    <button aria-label="Internet Explorer"><svg viewBox="0 0 36 36"><path d="M31 21H13q1 7 7 7 4 0 5-3h5q-3 8-11 8-11-1-11-13 1-12 12-13 11 0 11 14zm-18-4h12q-1-5-6-5-5 0-6 5z" fill="#38a4e8" stroke="#1b70b8" stroke-width=".5"/><path d="M32 5q-5-4-16 5Q3 22 5 31q3 3 9-2" fill="none" stroke="#f0bc2c" stroke-width="3"/></svg></button>
    <button aria-label="檔案總管"><svg viewBox="0 0 36 36"><path d="M3 6h10l2 3h17v22H3z" fill="#f5dc84" stroke="#c8a040"/><path d="M6 4h6v4H6zM15 6h14v4H15z" fill="#fff" stroke="#9ab"/><path d="M3 13h30v17H3z" fill="#fbeaa8"/><path d="M8 33V23h20v10h-5v-6H13v6z" fill="#8cd4f0" stroke="#4a98c0"/></svg></button>
    <button class="run" aria-label="Firefox"><svg viewBox="0 0 36 36"><circle cx="18" cy="17" r="14" fill="#2c62b4"/><path d="M14 6q6-3 10 2-1 6-6 6z" fill="#8cc8f0"/><path d="M4 7q2 3 6 3l4 4q-4 0-5 3 1 8 8 8 9-1 9-8l-2-9q8 4 9 11-1 14-16 15Q3 32 3 19q-1-6 1-12z" fill="#e8701c"/><path d="M29 8q5 7 3 14-5 10-15 10 10-3 12-10 2-6 0-14z" fill="#fcc030"/></svg></button>
    <button class="run act" aria-label="CimatronE"><svg viewBox="0 0 36 36"><path d="M20 2v9a8 8 0 0 0 0 14v9A16 16 0 0 1 20 2z" fill="#b4e814"/><path d="M31 11q-8 0-8 7t8 8v5q-13-1-13-13t13-13z" fill="#f48020"/><path d="M20 2l8 2v6l-8 2z" fill="#999"/><path d="M22 27l6 2v3l-6 2z" fill="#777"/></svg></button>
    <button class="run" aria-label="Tools"><svg viewBox="0 0 36 36"><path d="M3 21l6-6 11 2v8l-6 5-11-2z" fill="#20207c" stroke="#000"/><path d="M7 10h8v9l-4 3-3-4z" fill="#c41818" stroke="#000"/><path d="M11 23l8-9" stroke="#fff" stroke-width="2"/><path d="M21 8q1-6 7-6 5 1 2 7l-5 3z" fill="#dc2020" stroke="#000"/><path d="M22 12l3 2-2 4z" fill="#f08c40"/><path d="M17 26l6-3 2 3 8-2v9h-6l-2-4-5 5z" fill="#28c838" stroke="#000"/><path d="M27 15h4v12h-4z" fill="#f4dc2c" stroke="#000"/></svg></button>
    <button class="run" aria-label="小畫家"><svg viewBox="0 0 36 36"><path d="M4 22Q5 9 20 8q11 1 11 11-2 4-7 4 0 9-9 10Q5 33 4 22z" fill="#c8e4f4" stroke="#6894b4"/><circle cx="12" cy="15" r="3" fill="#58a848"/><circle cx="19" cy="13" r="2" fill="#e8c038"/><circle cx="9" cy="22" r="3" fill="#d44838"/><circle cx="16" cy="25" r="3" fill="#4898d8"/><path d="M30 3q4 2 3 6l-5 4-2-2zM26 12l2 2-8 20-1-1z" fill="#c48a4c" stroke="#8a5a2c"/></svg></button>
    <div class="tray">
        <svg class="kb" viewBox="0 0 16 16"><path d="M.5 6.500h15v8H.5z" fill="#eee" stroke="#777"/><path d="M2 9h12M2 11h12M4 13h8" stroke="#777" stroke-dasharray="1 1"/><path d="M8 6q0-3 5-4" fill="none" stroke="#777"/></svg>
        <svg class="help" viewBox="0 0 16 16"><circle cx="8" cy="8" r="7.500" fill="#14309c" stroke="#dde"/><path d="M5.500 6q0-3 3-3 4 1 1 4L8 9M8 11v2" fill="none" stroke="#fff" stroke-width="2"/></svg>
        <svg class="rs" viewBox="0 0 16 16"><path d="M6.500 1.500h6v4h-6zM3.500 4.500h6v4h-6z" fill="none" stroke="#fff"/></svg>
        <svg class="flag" viewBox="0 0 16 16"><path d="M2 1v14M3 2h6l1 2h4v6H8L7 8H3z" fill="#fff" stroke="#fff"/></svg>
        <svg viewBox="0 0 16 16"><path d="M4.500 4.500h10v8h-10zM6 14h8M1 2v5h3V2" fill="#678" stroke="#fff"/></svg>
        <svg viewBox="0 0 16 16"><path d="M1 6h3l4-4v12l-4-4H1z" fill="#fff"/><path d="M10 5q2 3 0 6M12 3q4 5 0 10" fill="none" stroke="#fff"/></svg>
        <div class="clock"><span>下午 10:17</span><span>2012/1/17</span></div>
        <button class="desk" aria-label="顯示桌面"></button>
    </div>
    <div class="mark">三维网www.3dportal.cn</div>
</div>
</body>
</html>
```
FILE: styles.css
```
*{
    box-sizing: border-box;
}
body{
    margin: 0;
    height: 100vh;
    display: flex;
    flex-direction: column;
    overflow: hidden;
    position: relative;
    background: #f0f0f0;
    color: #000;
    font: 12px "Open Sans", "Noto Sans CJK TC", sans-serif;
}
button, input, select{
    font: inherit;
    color: inherit;
    margin: 0;
}
button{
    padding: 0;
    border: 0;
    background: none;
    display: flex;
    align-items: center;
    justify-content: center;
}
p, h1, h2, ul{
    margin: 0;
    padding: 0;
    font-size: 12px;
    font-weight: normal;
    list-style: none;
}
.defs{
    position: absolute;
    width: 0;
    height: 0;
}

/* 標題列 */
.titlebar{
    height: 22px;
    flex: none;
    display: flex;
    align-items: center;
    padding: 0 2px 0 1px;
    border-top: 1px solid #3d4450;
    background: linear-gradient(#b9c8d8, #d6e3ef);
    color: #333;
}
.titlebar h1{
    font-family: "Noto Sans", sans-serif;
    line-height: 18px;
}
.i16{
    width: 18px;
    height: 18px;
    margin-right: 7px;
}
.winbtns{
    margin-left: auto;
    display: flex;
    gap: 2px;
}
.winbtns button{
    width: 31px;
    height: 17px;
    border: 1px solid #8b9cb4;
    border-radius: 2px;
    box-shadow: inset 0 0 0 1px #dbe6f0;
}
.winbtns svg{
    width: 20px;
    height: 14px;
}

/* 功能表 */
.menubar{
    height: 26px;
    flex: none;
    display: flex;
    align-items: center;
    gap: 16px;
    padding: 0 5px 0 18px;
    border-bottom: 1px solid #adb0bd;
    background: linear-gradient(#fff, #eef1f9 9px, #d3daec 9px, #d3daec);
    line-height: 16px;
}
.menubar a{
    color: #000;
    text-decoration: none;
}
.mdi{
    margin-left: auto;
    display: flex;
    gap: 4px;
}
.mdi svg{
    width: 12px;
    height: 12px;
    display: block;
}

/* 工具列 */
.toolbars{
    flex: none;
    height: 54px;
    background: linear-gradient(#d3d9ec 70%, #dfe5f5);
    border-bottom: 2px solid #8d9199;
}
.row{
    display: flex;
    height: 27px;
}
.group{
    display: flex;
    align-items: center;
    height: 27px;
    padding: 0 1px 0 10px;
    border-right: 1px solid #b4b8c6;
    border-bottom: 1px solid #b4b8c6;
    background: radial-gradient(circle at 2px 2px, #9a9fb0 1px, #fff 1px, transparent 2px) 3px 3px / 4px 4px repeat-y;
}
.row + .row .group{
    height: 25px;
    border-bottom: 0;
}
.group button{
    width: 22px;
    height: 22px;
    flex: none;
}
.group svg{
    width: 18px;
    height: 18px;
    flex: none;
}
.group .arrow{
    width: 11px;
}
.group .arrow svg{
    width: 8px;
    height: 8px;
}
.dim{
    color: #777;
}
.gray{
    color: #aaa;
}
.yellow{
    color: #fdf64c;
}
.off svg{
    filter: drop-shadow(1px 1px 0 #fff);
}
.group .on{
    border: 2px solid #5b6272;
    border-radius: 3px;
    background: #c3c8d8;
}
.sep{
    width: 6px;
    height: 18px;
    flex: none;
    background: linear-gradient(#666, #666) 2px 0 / 1px 18px no-repeat;
}
.nctools{
    margin-left: 142px;
    border-left: 1px solid #e6eaf6;
}
.display{
    margin-left: 254px;
    border-left: 1px solid #e6eaf6;
}

/* 下拉選單 */
.combo{
    position: relative;
    height: 20px;
    border: 1px solid #777;
    border-right-color: #eee;
    border-bottom-color: #eee;
    background: #fff;
}
.combo select{
    width: 100%;
    height: 100%;
    padding: 0 2px;
    border: 0;
    appearance: none;
    background: none;
    display: block;
}
.combo svg{
    position: absolute;
    right: 1px;
    top: 1px;
    width: 16px;
    height: 16px;
    padding: 3px;
    background: #f0f0f0;
    border: 1px solid #999;
    border-left-color: #fff;
    border-top-color: #fff;
    pointer-events: none;
}
.combo.big{
    width: 110px;
    height: 23px;
}
.combo.big svg{
    height: 19px;
}

/* 主區 */
.main{
    flex: 1;
    min-height: 0;
    display: flex;
}
.side{
    width: 69px;
    flex: none;
    padding-right: 1px;
}
.guide{
    display: flex;
    flex-direction: column;
    gap: 2px;
    padding: 11px 1px 2px 2px;
    border-right: 1px solid #bbb;
    border-bottom: 1px solid #aaa;
    background: repeating-linear-gradient(90deg, #aaa 0 1px, transparent 1px 4px) 2px 4px / 62px 2px no-repeat;
}
.guide button{
    height: 36px;
    padding-bottom: 4px;
    flex-direction: column;
    line-height: 14px;
}
.guide svg{
    width: 17px;
    height: 17px;
    flex: none;
}
.guide button:disabled{
    color: #8a8a8a;
}
.guide .cur{
    border: 1px solid #555;
    border-radius: 3px;
    background: linear-gradient(#d8d8d8, #ececec);
}
.work{
    flex: 1;
    min-width: 0;
    display: flex;
    flex-direction: column;
}
.view{
    flex: 1;
    min-height: 0;
    margin-right: 2px;
    border-left: 2px solid #6b6b6b;
    border-top: 1px solid #777;
    border-bottom: 1px solid #fff;
    background: #e4e4e4;
}
.view svg{
    display: block;
    width: 100%;
    height: 100%;
}
.axes{
    font: 12px "Liberation Sans", sans-serif;
    fill: #666;
}
.axes.red{
    fill: #d2143c;
}
.axes .sm{
    font-size: 10px;
}

/* NC計算檢測 */
.check{
    flex: none;
    padding-top: 7px;
}
.check h2{
    height: 20px;
    display: flex;
    align-items: center;
    justify-content: space-between;
    padding: 0 3px;
    border: 1px solid #999;
    color: #333;
}
.check h2 svg{
    width: 10px;
    height: 10px;
}
.grid{
    margin-top: 2px;
    height: 97px;
    border: 1px solid #6b6b6b;
    border-top-width: 2px;
    border-bottom-width: 2px;
    display: flex;
    flex-direction: column;
}
.grid table{
    width: 100%;
    border-spacing: 0;
    table-layout: fixed;
    border-bottom: 34px solid #fff;
}
.grid th{
    height: 19px;
    padding: 0 6px;
    text-align: left;
    font-weight: normal;
    line-height: 18px;
    white-space: nowrap;
    border-right: 1px solid #999;
    border-bottom: 1px solid #999;
}
.grid th:last-child{
    border: 0;
}
.w60{
    width: 60px;
}
.w85{
    width: 85px;
}
.w120{
    width: 120px;
}
.btns{
    flex: 1;
    display: flex;
    justify-content: flex-end;
    align-items: center;
    gap: 8px;
    padding-right: 8px;
}
.btns button, .acts button{
    width: 25px;
    height: 25px;
    border: 1px solid #fff;
    border-right-color: #888;
    border-bottom-color: #888;
}
.btns svg{
    width: 18px;
    height: 18px;
}

/* 狀態列 */
.status{
    flex: none;
    height: 19px;
    display: flex;
    justify-content: flex-end;
    align-items: center;
    padding-right: 5px;
    background: #f0eded;
    border-bottom: 1px solid #444;
}
.status span{
    padding-right: 7px;
}
.status .tp{
    width: 98px;
    border-right: 1px solid #ccc;
}
.status .tool{
    width: 124px;
    padding-left: 6px;
    border-right: 1px solid #ccc;
}
.status .key{
    padding: 0 5px 0 6px;
    color: #888;
    border-right: 1px solid #ccc;
}
.status .key:last-child{
    padding-right: 0;
    border: 0;
}
.status .lit{
    color: #222;
}

/* 對話框 */
.dialog{
    position: absolute;
    left: 75px;
    top: 97px;
    width: 464px;
    border: 1px solid #16222c;
    border-radius: 5px 5px 0 0;
    box-shadow: inset 0 0 0 1px #8fd0e6;
    background: #f0f0f0;
    padding: 1px 1px 7px;
    font: 12px "Noto Sans CJK TC", sans-serif;
    line-height: 16px;
}
.dtitle{
    height: 22px;
    display: flex;
    justify-content: space-between;
    align-items: center;
    padding: 0 4px 0 6px;
    border-radius: 4px 4px 0 0;
    background: linear-gradient(#9dbbd8, #b8cfe6);
}
.dtitle button{
    width: 31px;
    height: 17px;
    border: 1px solid #5a2020;
    border-radius: 2px;
    background: linear-gradient(#e2a59a, #c9483a 50%, #cf6250);
}
.dtitle svg{
    width: 12px;
    height: 10px;
}
.lists{
    display: flex;
    padding-left: 13px;
}
.lists p{
    height: 18px;
    line-height: 18px;
}
.box{
    width: 202px;
    height: 164px;
    border: 1px solid #fff;
    border-left: 2px solid #777;
    border-top: 2px solid #777;
    background: #fff;
    overflow: hidden;
    white-space: nowrap;
    display: flex;
    flex-direction: column;
    justify-content: space-between;
}
.right .box{
    width: 175px;
    padding-left: 1px;
    line-height: 12px;
}
.tree{
    padding-left: 13px;
}
.tree li{
    line-height: 18px;
}
.tree > li{
    padding: 0;
}
.tree svg{
    width: 14px;
    height: 14px;
    margin-right: 17px;
    vertical-align: middle;
}
.tree ul{
    margin-left: 31px;
    color: #777;
    background:
        repeating-linear-gradient(#999 0 1px, transparent 1px 2px) 0 0 / 1px 46px no-repeat,
        repeating-linear-gradient(90deg, #999 0 1px, transparent 1px 2px) 0 9px / 8px 1px no-repeat,
        repeating-linear-gradient(90deg, #999 0 1px, transparent 1px 2px) 0 27px / 8px 1px no-repeat,
        repeating-linear-gradient(90deg, #999 0 1px, transparent 1px 2px) 0 45px / 8px 1px no-repeat;
}
.tree ul li{
    padding-left: 19px;
}
.root{
    font: 11px "Liberation Serif", serif;
}
.minus{
    display: inline-block;
    width: 11px;
    height: 11px;
    margin-right: 13px;
    border: 1px solid #888;
    line-height: 8px;
    text-align: center;
    vertical-align: middle;
}
.scroll{
    display: flex;
    height: 16px;
    background: #f7f7f7;
}
.scroll button, .scroll i{
    width: 16px;
    border: 1px solid #fff;
    border-right-color: #777;
    border-bottom-color: #777;
    background: #f0f0f0;
}
.scroll i{
    width: 141px;
    margin-right: auto;
}
.scroll svg{
    width: 8px;
    height: 8px;
    margin: 0;
}
.sl svg{
    transform: rotate(90deg);
}
.sr svg{
    transform: rotate(-90deg);
}
.moves{
    width: 20px;
    padding-top: 43px;
}
.moves button{
    width: 20px;
    height: 28px;
}
.moves svg{
    width: 13px;
    height: 13px;
}
.green{
    color: #1ed02c;
}
.redb{
    color: #d41c1c;
}
.redb svg{
    transform: scaleX(-1);
}
fieldset{
    min-width: 0;
    margin: 5px 10px 7px 13px;
    padding: 0 0 0 35px;
    height: 34px;
    border: 1px solid #999;
    display: flex;
}
legend{
    margin-left: -30px;
    padding: 0 2px;
}
fieldset label, .line label{
    display: flex;
    align-items: center;
    gap: 5px;
}
fieldset label{
    width: 120px;
    height: 12px;
    flex: none;
}
fieldset label + label{
    width: 148px;
}
fieldset label:last-child{
    width: 100px;
}
input[type=radio], input[type=checkbox]{
    appearance: none;
    width: 12px;
    height: 12px;
    border: 1px solid #777;
    border-right-color: #ddd;
    border-bottom-color: #ddd;
    background: #fff;
    flex: none;
}
input[type=radio]{
    width: 11px;
    height: 11px;
    border-radius: 50%;
}
input[type=radio]:checked{
    background: radial-gradient(#000 2px, #fff 3px);
}
input[type=checkbox]:checked::after{
    content: "";
    display: block;
    width: 4px;
    height: 8px;
    margin-left: 3px;
    border: solid #000;
    border-width: 0 2px 2px 0;
    transform: rotate(40deg);
}
hr{
    margin: 0 11px 0 12px;
    border: 0;
    border-top: 1px solid #999;
    border-bottom: 1px solid #fff;
}
.line{
    display: grid;
    align-items: center;
    height: 42px;
    padding: 0 11px 2px 16px;
}
.l1, .l2{
    grid-template-columns: 118px 31px 106px 1fr;
}
.l2{
    height: 50px;
}
.l2 span{
    padding-left: 17px;
}
.l3{
    grid-template-columns: 74px 57px 73px 52px;
    height: 43px;
    padding-bottom: 6px;
}
.l3 input + label{
    padding-left: 14px;
}
.l3 input{
    width: 100%;
    height: 18px;
    padding: 0 2px;
    border: 1px solid #fff;
    border-left: 2px solid #777;
    border-top: 2px solid #777;
    font: 10px "Liberation Mono", monospace;
}
tt{
    font: 10px "Liberation Mono", monospace;
}
.l4{
    grid-template-columns: 115px 1fr;
    height: 76px;
    padding: 0 0 34px 264px;
}
.l5{
    grid-template-columns: 95px 114px 1fr;
    height: 51px;
    align-items: start;
    padding-top: 9px;
}
.l5 label{
    height: 21px;
}
.opt{
    height: 21px;
    border: 1px solid #fff;
    border-right: 2px solid #777;
    border-bottom: 2px solid #777;
}
.acts{
    display: flex;
    justify-content: flex-end;
    gap: 7px;
    padding-top: 15px;
}
.acts button{
    width: 27px;
}
.acts svg{
    width: 18px;
    height: 18px;
}

/* 工作列 */
.taskbar{
    flex: none;
    height: 40px;
    position: relative;
    display: flex;
    gap: 4px;
    border-top: 1px solid #5c6a7c;
    background: linear-gradient(90deg, #8193aa, #8193aa 50px, #a5bedb 90px, #a5bedb 85%, #8193aa 87%);
}
.taskbar > button{
    width: 58px;
}
.taskbar > .start{
    width: 54px;
    margin-right: 2px;
}
.taskbar > button svg{
    width: 34px;
    height: 34px;
}
.taskbar > .start svg{
    width: 36px;
    height: 36px;
}
.run{
    border: 1px solid #4c5f78;
    border-radius: 3px;
    background: linear-gradient(135deg, #d2deec, #a9bdd6);
    box-shadow: inset 0 0 0 1px #dfe9f4;
}
.run.act{
    background: linear-gradient(135deg, #fff, #cbd8e8);
}
.tray{
    margin-left: auto;
    display: flex;
    align-items: center;
    gap: 7px;
    color: #fff;
}
.tray svg{
    width: 16px;
    height: 16px;
}
.tray .rs{
    align-self: flex-start;
    margin-top: 5px;
}
.tray .flag{
    margin-left: 20px;
}
.clock{
    width: 76px;
    display: flex;
    flex-direction: column;
    align-items: center;
    line-height: 20px;
}
.desk{
    width: 15px;
    height: 39px;
    border: 1px solid #4f6178;
    background: linear-gradient(135deg, #9aabc0, #54667c 60%, #8193aa);
}
.mark{
    position: absolute;
    right: 20px;
    top: 14px;
    color: #fff;
    font: italic bold 16px "DejaVu Sans", "Noto Sans CJK SC", sans-serif;
    line-height: 24px;
    -webkit-text-stroke: 3px #e03a3a;
    paint-order: stroke fill;
}
```
